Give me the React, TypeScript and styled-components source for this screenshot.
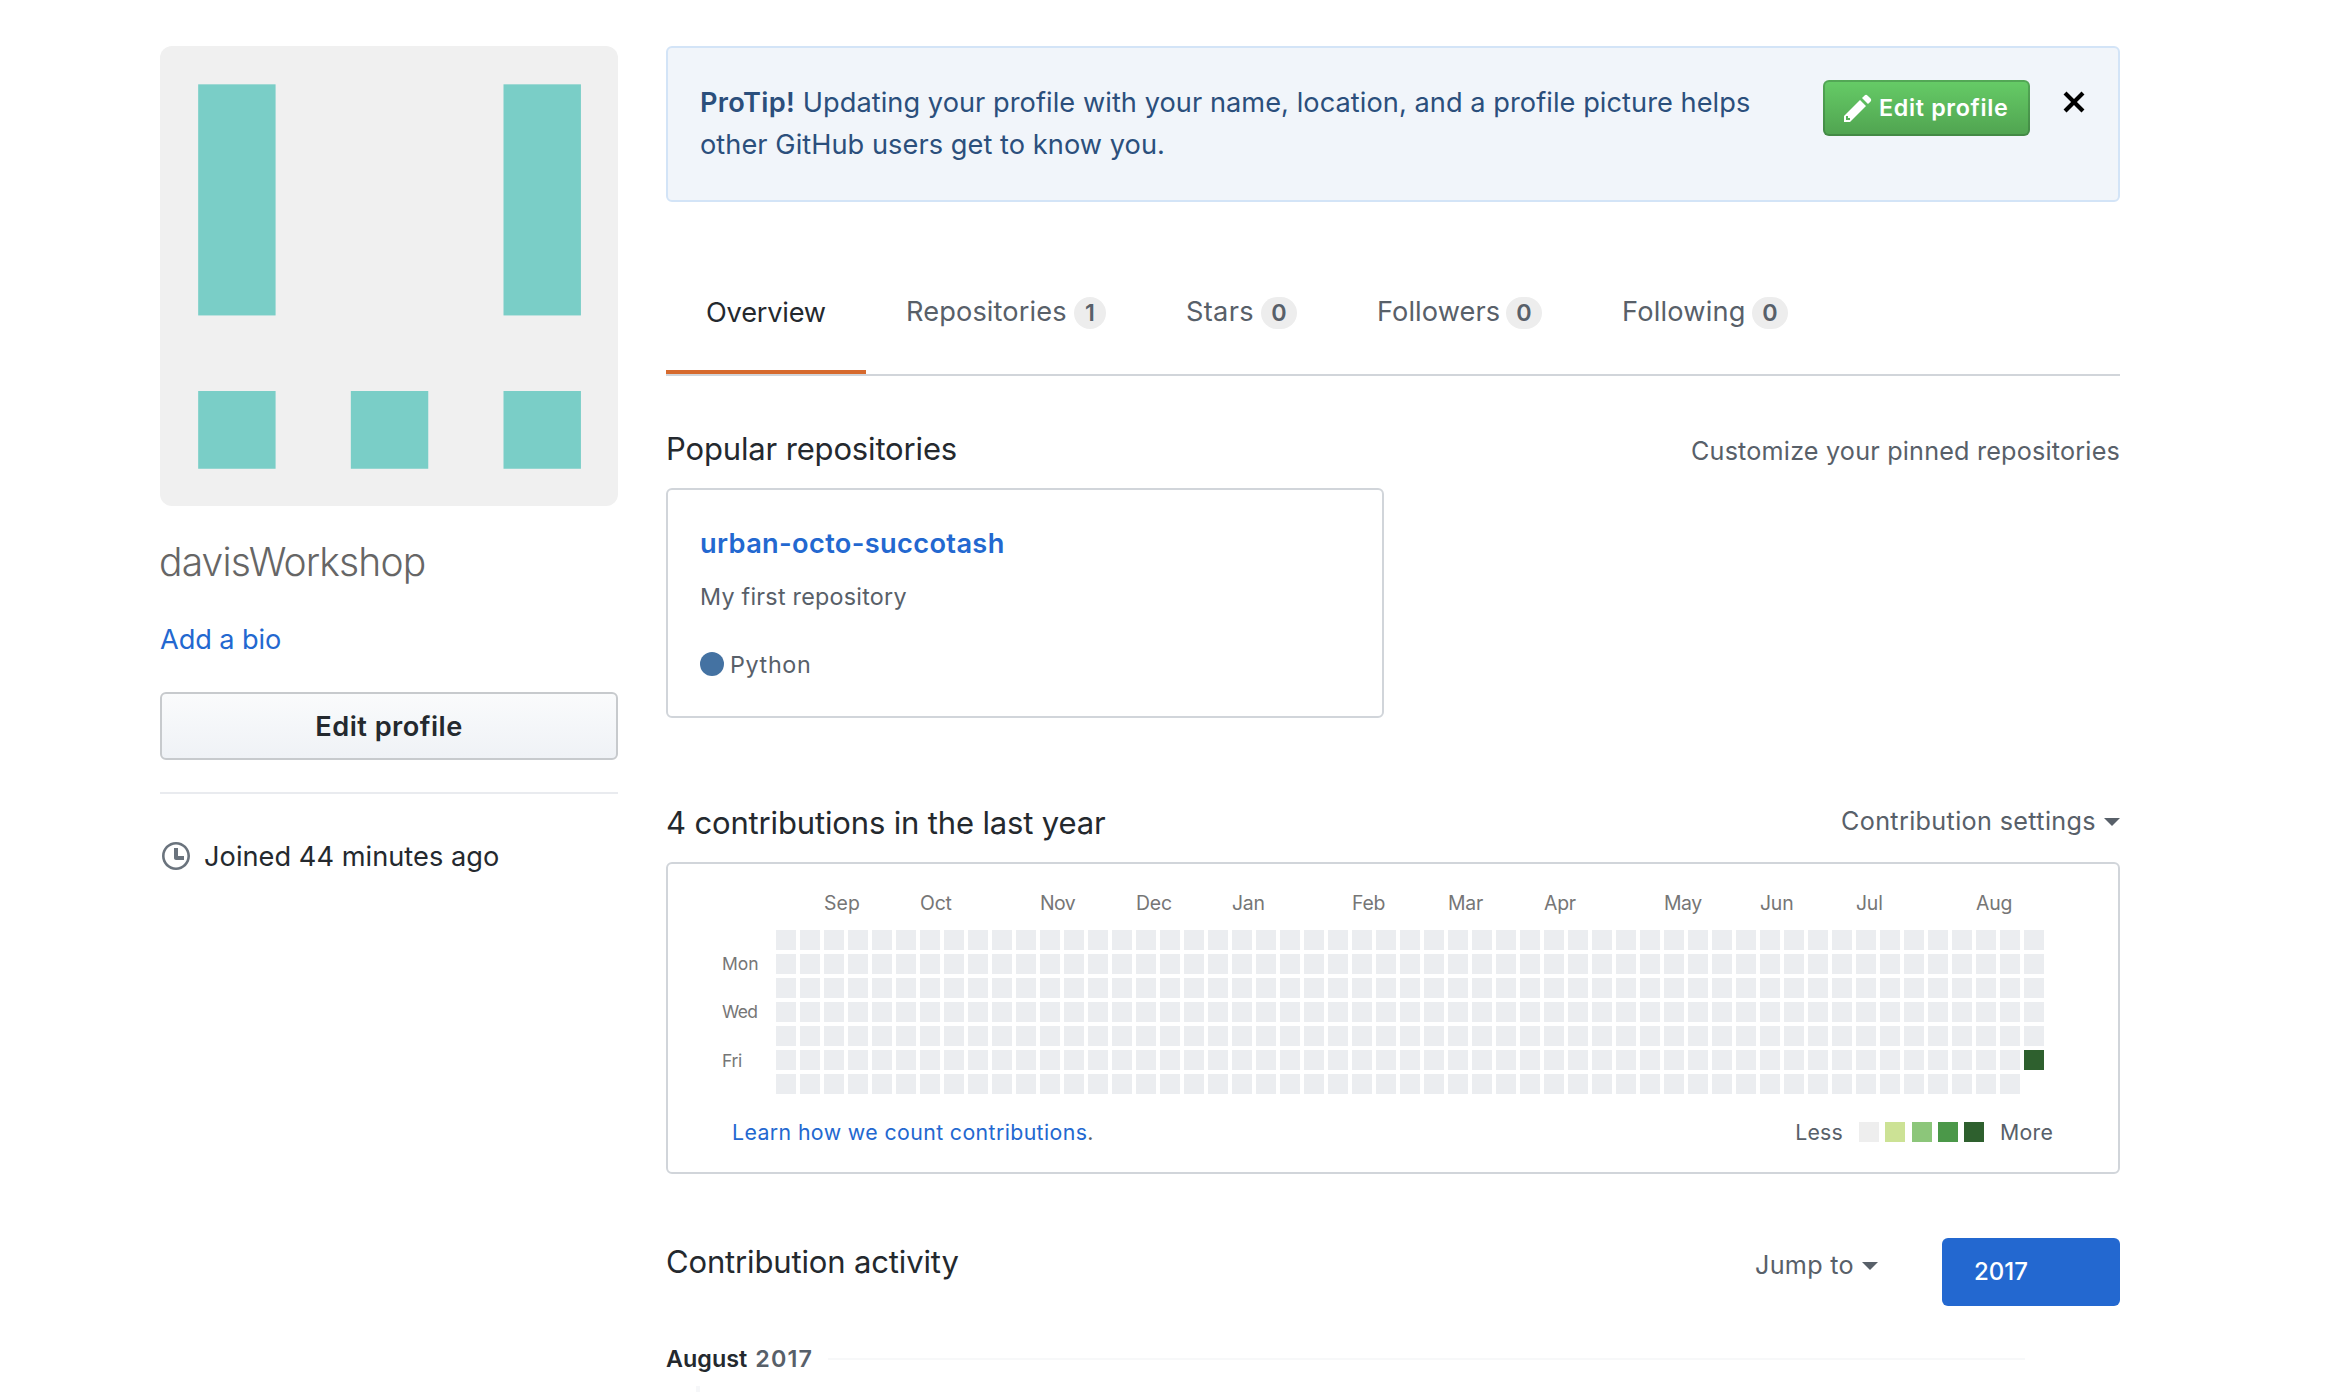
import React from 'react';
import styled, { createGlobalStyle } from 'styled-components';

const GlobalStyle = createGlobalStyle`
  *, *::before, *::after { box-sizing: border-box; }
  body {
    margin: 0;
    background: #fff;
    color: #24292e;
    font-family: Inter, "Liberation Sans", sans-serif;
    font-size: 27.2px;
    line-height: 42px;
    overflow: hidden;
  }
  h1, h2, h3, p { margin: 0; font-weight: 400; }
  a { color: #2368d0; text-decoration: none; }
  button { font-family: inherit; cursor: pointer; }
`;

const Page = styled.div`
  display: flex;
  gap: 48px;
  height: 1392px;
  padding: 46px 0 0 160px;
  overflow: hidden;
`;

/* ---------- sidebar ---------- */

const Sidebar = styled.aside`
  width: 458px;
  flex: none;
  display: flex;
  flex-direction: column;
`;

const Avatar = styled.svg`
  display: block;
  width: 458px;
  height: 460px;
  border-radius: 12px;
  background: #f0f0f0;
`;

const Username = styled.h1`
  margin: 31px 0 0 -1px;
  font-size: 39px;
  font-weight: 350;
  line-height: 50px;
  letter-spacing: -0.85px;
  color: #666;
`;

const BioLink = styled.a`
  margin-top: 32px;
  letter-spacing: -0.1px;
`;

const ProfileButton = styled.button`
  height: 68px;
  margin-top: 31px;
  padding: 0;
  border: 2px solid #c7cacd;
  border-radius: 6px;
  background: linear-gradient(#fafbfc, #eff2f6);
  color: #24292e;
  font-size: 27.2px;
  font-weight: 600;
  letter-spacing: 0.48px;
`;

const Divider = styled.hr`
  width: 100%;
  height: 2px;
  margin: 32px 0 0;
  border: 0;
  background: #e9ebef;
`;

const Joined = styled.div`
  display: flex;
  align-items: center;
  gap: 14px;
  margin-top: 42px;
  padding-left: 2px;
  letter-spacing: 0.03px;
`;

const Icon = styled.svg`
  display: block;
  flex: none;
  fill: currentColor;
`;

const ClockIcon = styled(Icon)`
  margin-bottom: 2px;
  color: #6a737d;
`;

/* ---------- main column ---------- */

const Main = styled.main`
  width: 1454px;
  flex: none;
`;

const Banner = styled.section`
  display: flex;
  align-items: flex-start;
  height: 156px;
  padding: 32px 32px 0;
  border: 2px solid #d3e4f7;
  border-radius: 6px;
  background: #f1f5fa;
  color: #2b4f7c;
`;

const BannerText = styled.p`
  width: 1080px;
  margin: 2px auto 0 0;
  letter-spacing: 0.05px;
`;

const BannerLead = styled.strong`
  font-weight: 600;
  letter-spacing: 0.3px;
`;

const GreenButton = styled.button`
  display: flex;
  align-items: center;
  gap: 7px;
  width: 207px;
  height: 56px;
  padding: 0 0 0 19px;
  border: 2px solid rgba(27, 60, 35, 0.25);
  border-radius: 6px;
  background: linear-gradient(#66cc67, #50a350) border-box;
  color: #fff;
  font-size: 23.3px;
  font-weight: 600;
  letter-spacing: 0.66px;
`;

const ButtonLabel = styled.span`
  padding-bottom: 2px;
`;

const CloseButton = styled.button`
  margin: 6px 0 0 32px;
  padding: 0;
  border: 0;
  background: none;
  color: #000;
`;

const Tabs = styled.nav`
  display: flex;
  height: 124px;
  margin-top: 50px;
  border-bottom: 2px solid #d1d5da;
`;

const Tab = styled.a<{ $width: number; $active?: boolean; $track: number }>`
  display: flex;
  align-items: center;
  justify-content: space-between;
  width: ${(p) => p.$width}px;
  padding: ${(p) => (p.$active ? '4px' : '2px')} 40px 0;
  border-bottom: 4px solid ${(p) => (p.$active ? '#d66a2e' : 'transparent')};
  color: ${(p) => (p.$active ? '#24292e' : '#586069')};
  letter-spacing: ${(p) => p.$track}px;
  white-space: nowrap;
`;

const Counter = styled.span<{ $narrow?: boolean }>`
  width: ${(p) => (p.$narrow ? 32 : 36)}px;
  height: 32px;
  margin-top: 2px;
  border-radius: 16px;
  background: #ededed;
  font-size: 23.3px;
  font-weight: 600;
  line-height: 31px;
  letter-spacing: 0;
  text-align: center;
`;

const SectionHead = styled.header<{ $top: number }>`
  display: flex;
  align-items: flex-start;
  justify-content: space-between;
  height: 48px;
  margin: ${(p) => p.$top}px 0 15px;
`;

const Heading = styled.h2`
  font-size: 31px;
  line-height: 48px;
  letter-spacing: -0.15px;
`;

const MutedLink = styled.a<{ $shift: number; $track: number }>`
  display: flex;
  align-items: center;
  gap: 8px;
  height: 48px;
  margin-top: ${(p) => p.$shift}px;
  color: #586069;
  font-size: 25.2px;
  letter-spacing: ${(p) => p.$track}px;
`;

const Caret = styled.span`
  margin-top: 1px;
  border: 8px solid transparent;
  border-top-color: currentColor;
  border-bottom: 0;
`;

const RepoCard = styled.article`
  width: 718px;
  height: 230px;
  padding: 36px 32px;
  border: 2px solid #d1d5da;
  border-radius: 6px;
  color: #586069;
  font-size: 23.3px;
  line-height: 36px;
`;

const RepoName = styled.a`
  display: block;
  font-size: 27.2px;
  font-weight: 600;
  letter-spacing: 0.35px;
`;

const RepoDescription = styled.p`
  margin-top: 17px;
  letter-spacing: 0.25px;
`;

const Language = styled.div`
  display: flex;
  align-items: center;
  gap: 6px;
  margin-top: 32px;
  letter-spacing: 0.65px;
`;

const LanguageDot = styled.span`
  width: 24px;
  height: 24px;
  margin-bottom: 2px;
  border-radius: 50%;
  background: #4472a2;
`;

/* ---------- contribution calendar ---------- */

const GraphBox = styled.section`
  height: 312px;
  padding: 27px 65px 0 54px;
  border: 2px solid #d1d5da;
  border-radius: 6px;
`;

const Months = styled.div`
  display: grid;
  grid-template-columns: repeat(53, 24px);
  margin: 0 0 15px 54px;
  color: #767676;
  font-size: 19.4px;
  line-height: 24px;
  white-space: nowrap;
`;

const Month = styled.span<{ $week: number; $track?: number }>`
  grid-row: 1;
  grid-column: ${(p) => p.$week + 1};
  letter-spacing: ${(p) => p.$track ?? -0.2}px;
`;

const Calendar = styled.div`
  display: flex;
`;

const Days = styled.div`
  display: grid;
  grid-template-rows: repeat(7, 20px);
  row-gap: 4px;
  width: 54px;
  color: #767676;
  font-size: 17.5px;
  line-height: 20px;
`;

const Day = styled.span<{ $row: number; $track: number; $drop?: number }>`
  grid-row: ${(p) => p.$row};
  padding-top: ${(p) => p.$drop ?? 0}px;
  letter-spacing: ${(p) => p.$track}px;
`;

const Cells = styled.div`
  display: grid;
  grid-auto-flow: column;
  grid-template-rows: repeat(7, 20px);
  grid-auto-columns: 20px;
  gap: 4px;
`;

const Cell = styled.span<{ $color: string }>`
  width: 20px;
  height: 20px;
  background: ${(p) => p.$color};
`;

const GraphFooter = styled.footer`
  display: flex;
  align-items: center;
  justify-content: space-between;
  margin-top: 22px;
  padding-left: 10px;
  color: #586069;
  font-size: 21.3px;
  line-height: 32px;
`;

const LearnMore = styled.span`
  letter-spacing: 0.39px;
`;

const Legend = styled.div`
  display: flex;
  align-items: center;
  gap: 16px;
  letter-spacing: 0.2px;
`;

const Swatches = styled.div`
  display: flex;
  gap: 6.3px;
`;

/* ---------- activity ---------- */

const ActivityHead = styled.header`
  display: flex;
  height: 68px;
  margin-top: 64px;
`;

const ActivityTitle = styled.div`
  display: flex;
  align-items: flex-start;
  justify-content: space-between;
  width: 1212px;
  margin-right: 64px;
`;

const Year = styled.a`
  width: 178px;
  padding-left: 32px;
  border-radius: 6px;
  background: #2368d0;
  color: #fff;
  font-size: 24px;
  font-weight: 500;
  line-height: 67px;
`;

const MonthTitle = styled.h3`
  display: flex;
  align-items: center;
  width: 1359px;
  margin-top: 35px;
  font-size: 23.3px;
  font-weight: 600;
  line-height: 36px;
  letter-spacing: 0.03px;

  &::after {
    content: '';
    flex: 1;
    height: 2px;
    margin-left: 15px;
    background: #f7f8f9;
  }
`;

const MonthYear = styled.span`
  margin-left: 8px;
  color: #586069;
  letter-spacing: 1.2px;
`;

const Timeline = styled.div`
  height: 40px;
  margin: 9px 0 0 30px;
  border-left: 4px solid #f6f7f9;
`;

const EMPTY = '#ebedf0';
const DARKEST = '#2e602e';

const months: [string, number, number?][] = [
  ['Sep', 2, 0.1], ['Oct', 6], ['Nov', 11, -0.5], ['Dec', 15], ['Jan', 19], ['Feb', 24],
  ['Mar', 28], ['Apr', 32], ['May', 37, -0.4], ['Jun', 41], ['Jul', 45], ['Aug', 50],
];

const cells = Array.from({ length: 53 * 7 - 1 }, (_, i) => (i === 52 * 7 + 5 ? DARKEST : EMPTY));

const legend = ['#eeeeee', '#cce295', '#8cc67a', '#4b9849', DARKEST];

export default function App() {
  return (
    <>
      <GlobalStyle />
      <Page>
        <Sidebar>
          <Avatar viewBox="0 0 420 420" preserveAspectRatio="none">
            <g fill="#7acec7">
              <rect x="35" y="35" width="71" height="211" />
              <rect x="315" y="35" width="71" height="211" />
              <rect x="35" y="315" width="71" height="71" />
              <rect x="175" y="315" width="71" height="71" />
              <rect x="315" y="315" width="71" height="71" />
            </g>
          </Avatar>
          <Username>davisWorkshop</Username>
          <BioLink>Add a bio</BioLink>
          <ProfileButton>Edit profile</ProfileButton>
          <Divider />
          <Joined>
            <ClockIcon width="28" height="32" viewBox="0 0 14 16">
              <path fillRule="evenodd" d="M8 8h3v2H7c-.55 0-1-.45-1-1V4h2v4zM7 2.3c3.14 0 5.7 2.56 5.7 5.7s-2.56 5.7-5.7 5.7A5.71 5.71 0 0 1 1.3 8c0-3.14 2.56-5.7 5.7-5.7zM7 1C3.14 1 0 4.14 0 8s3.14 7 7 7 7-3.14 7-7-3.14-7-7-7z" />
            </ClockIcon>
            Joined 44 minutes ago
          </Joined>
        </Sidebar>

        <Main>
          <Banner>
            <BannerText>
              <BannerLead>ProTip!</BannerLead> Updating your profile with your name, location, and a
              profile picture helps other GitHub users get to know you.
            </BannerText>
            <GreenButton>
              <Icon width="28" height="32" viewBox="0 0 14 16">
                <path fillRule="evenodd" d="M0 12v3h3l8-8-3-3-8 8zm3 2H1v-2h1v1h1v1zm10.3-9.3L12 6 9 3l1.3-1.3a.996.996 0 0 1 1.41 0l1.59 1.59c.39.39.39 1.02 0 1.41z" />
              </Icon>
              <ButtonLabel>Edit profile</ButtonLabel>
            </GreenButton>
            <CloseButton aria-label="Dismiss">
              <Icon width="24" height="32" viewBox="0 0 12 16">
                <path fillRule="evenodd" d="M7.48 8l3.75 3.75-1.48 1.48L6 9.48l-3.75 3.75-1.48-1.48L4.52 8 .77 4.25l1.48-1.48L6 6.52l3.75-3.75 1.48 1.48z" />
              </Icon>
            </CloseButton>
          </Banner>

          <Tabs>
            <Tab $width={200} $track={-0.2} $active>Overview</Tab>
            <Tab $width={280} $track={0.12}>Repositories <Counter $narrow>1</Counter></Tab>
            <Tab $width={191} $track={0.3}>Stars <Counter>0</Counter></Tab>
            <Tab $width={245} $track={0.08}>Followers <Counter>0</Counter></Tab>
            <Tab $width={246} $track={0.2}>Following <Counter>0</Counter></Tab>
          </Tabs>

          <SectionHead $top={49}>
            <Heading>Popular repositories</Heading>
            <MutedLink $shift={2} $track={0.19}>Customize your pinned repositories</MutedLink>
          </SectionHead>
          <RepoCard>
            <RepoName>urban-octo-succotash</RepoName>
            <RepoDescription>My first repository</RepoDescription>
            <Language>
              <LanguageDot />
              Python
            </Language>
          </RepoCard>

          <SectionHead $top={81}>
            <Heading>4 contributions in the last year</Heading>
            <MutedLink $shift={-2} $track={0.34}>
              Contribution settings
              <Caret />
            </MutedLink>
          </SectionHead>
          <GraphBox>
            <Months>
              {months.map(([name, week, track]) => (
                <Month key={name} $week={week} $track={track}>{name}</Month>
              ))}
            </Months>
            <Calendar>
              <Days>
                <Day $row={2} $track={0}>Mon</Day>
                <Day $row={4} $track={-0.7}>Wed</Day>
                <Day $row={6} $track={-0.3} $drop={1}>Fri</Day>
              </Days>
              <Cells>
                {cells.map((color, i) => (
                  <Cell key={i} $color={color} />
                ))}
              </Cells>
            </Calendar>
            <GraphFooter>
              <LearnMore><a>Learn how we count contributions</a>.</LearnMore>
              <Legend>
                Less
                <Swatches>
                  {legend.map((color) => (
                    <Cell key={color} $color={color} />
                  ))}
                </Swatches>
                More
              </Legend>
            </GraphFooter>
          </GraphBox>

          <ActivityHead>
            <ActivityTitle>
              <Heading>Contribution activity</Heading>
              <MutedLink $shift={3} $track={0.3}>
                Jump to
                <Caret />
              </MutedLink>
            </ActivityTitle>
            <Year>2017</Year>
          </ActivityHead>
          <MonthTitle>
            August <MonthYear>2017</MonthYear>
          </MonthTitle>
          <Timeline />
        </Main>
      </Page>
    </>
  );
}
